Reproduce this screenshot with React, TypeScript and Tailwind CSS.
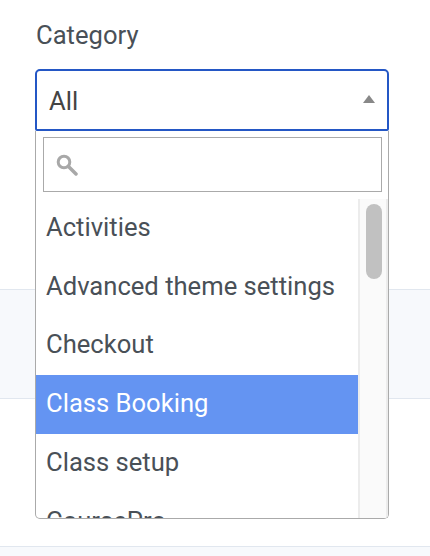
import React from "react";

const items = ["Activities", "Advanced theme settings", "Checkout", "Class Booking", "Class setup", "CoursePro"];

function Band({ className }: { className: string }) {
  return <div className={className} />;
}

export default function App() {
  return (
    <div className="relative h-[556px] w-[430px] overflow-hidden bg-white font-['Roboto',sans-serif]">
      <Band className="h-[289px] bg-white" />
      <Band className="h-[110px] border-y border-[#e1e7ef] bg-[#f7f9fc]" />
      <Band className="h-[147px] bg-white" />
      <Band className="h-[10px] border-t border-[#e1e7ef] bg-[#f7f9fc]" />

      <div className="absolute left-[35px] top-[21px] w-[354px]">
        <div className="h-[28px] pl-px text-[25.6px] leading-[29px] text-[#495057]">Category</div>
        <div className="mt-[20px] flex h-[62px] items-center justify-between rounded-t-[5px] rounded-b-[2px] border-2 border-[#2457c5] bg-white pl-[12px] pr-[12px]">
          <span className="pt-[2px] text-[25.6px] leading-[30px] text-[#444444]">All</span>
          <svg width="12" height="8" viewBox="0 0 12 8" className="mb-[2px]">
            <path d="M6 0L12 8H0Z" fill="#888888" />
          </svg>
        </div>
        <div className="h-[388px] overflow-hidden rounded-b-[5px] border-x border-b border-[#aaaaaa] bg-white">
          <div className="pl-[7px] pr-[6px] pt-[6px] pb-[6.5px]">
            <div className="flex h-[55px] items-center border border-[#aaaaaa] pl-[12px]">
              <svg width="24" height="26" viewBox="0 0 24 26" fill="none" className="mt-[2px] blur-[0.6px]">
                <circle cx="8" cy="9" r="5.8" stroke="#a8a8a8" strokeWidth="3" />
                <path d="M12.5 13.5L20 21" stroke="#a8a8a8" strokeWidth="3.5" strokeLinecap="round" />
              </svg>
            </div>
          </div>
          <div className="flex h-[320px] overflow-hidden">
            <div className="w-[322px] shrink-0">
              {items.map((t, i) => (
                <div
                  key={t}
                  className={
                    i === 3
                      ? "flex h-[58.75px] items-center bg-[#6494f2] pb-[2px] pl-[10px] text-[25.6px] leading-[30px] text-white"
                      : "flex h-[58.75px] items-center pb-[2px] pl-[10px] text-[25.6px] leading-[30px] text-[#495057]"
                  }
                >
                  {t}
                </div>
              ))}
            </div>
            <div className="relative flex-1 border-x-2 border-[#ececec] bg-[#fafafa]">
              <div className="ml-[6px] mt-[5.5px] h-[75px] w-[16px] rounded-full bg-[#c1c1c1]" />
            </div>
          </div>
        </div>
      </div>
    </div>
  );
}
